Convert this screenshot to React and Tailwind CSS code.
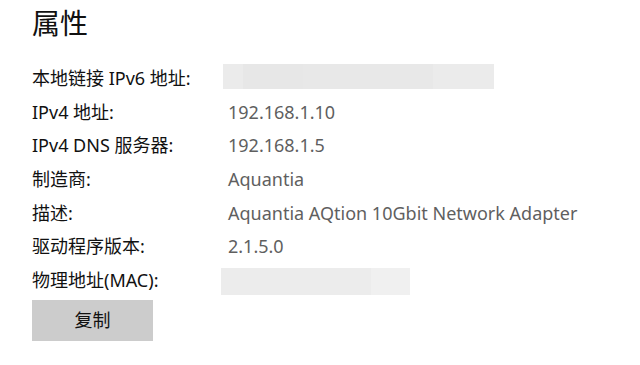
// Network adapter properties panel
const rows = [
  { label: "本地链接 IPv6 地址:" },
  { label: "IPv4 地址:", value: "192.168.1.10" },
  { label: "IPv4 DNS 服务器:", value: "192.168.1.5" },
  { label: "制造商:", value: "Aquantia" },
  { label: "描述:", value: "Aquantia AQtion 10Gbit Network Adapter" },
  { label: "驱动程序版本:", value: "2.1.5.0" },
  { label: "物理地址(MAC):", mac: true },
];

const BlurBox = ({ mac }) =>
  mac ? (
    <div className="flex h-[27px] w-[189px] -ml-[7px] mt-[3px]">
      <div className="w-[150px] bg-[#ececec]" />
      <div className="flex-1 bg-[#f0f0f0]" />
    </div>
  ) : (
    <div className="flex h-[25px] w-[271px] -ml-[5px] -mt-[5px]">
      <div className="w-[20px] bg-[#ebebeb]" />
      <div className="w-[60px] bg-[#e7e7e7]" />
      <div className="w-[130px] bg-[#e8e8e8]" />
      <div className="flex-1 bg-[#ebebeb]" />
    </div>
  );

export default function App() {
  return (
    <div
      className="w-[640px] h-[365px] bg-white pl-[32px] overflow-hidden"
      style={{ fontFamily: '"Noto Sans", "Noto Sans CJK SC", sans-serif' }}
    >
      <h1 className="text-[28px] leading-[46px] text-[#111] font-normal">属性</h1>
      <div className="mt-[16px] flex flex-col">
        {rows.map((r, i) => (
          <div key={i} className="flex items-center h-[33.6px] text-[18px]">
            <div className="w-[196px] text-[#111] whitespace-nowrap">{r.label}</div>
            {r.value ? (
              <div className="text-[#5f5f5f] whitespace-nowrap">{r.value}</div>
            ) : (
              <BlurBox mac={r.mac} />
            )}
          </div>
        ))}
      </div>
      <button className="mt-[3px] w-[121px] h-[41px] bg-[#cccccc] text-[18px] text-[#111]">
        复制
      </button>
    </div>
  );
}
